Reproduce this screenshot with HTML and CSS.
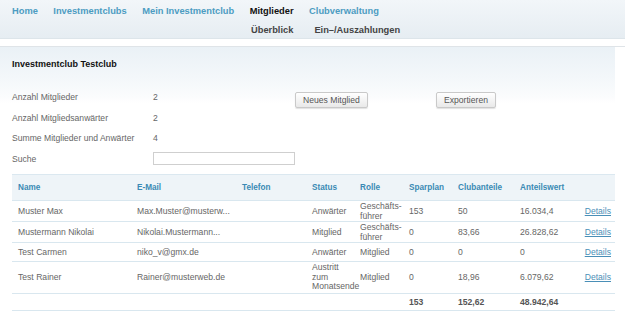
FILE: index.html
```html
<!DOCTYPE html>
<html lang="de">
<head>
<meta charset="utf-8">
<title>Mitglieder</title>
<link rel="stylesheet" href="styles.css">
</head>
<body>
<header class="nav">
  <nav class="nav-main">
    <a class="nav-link">Home</a>
    <a class="nav-link">Investmentclubs</a>
    <a class="nav-link">Mein Investmentclub</a>
    <a class="nav-link active">Mitglieder</a>
    <a class="nav-link">Clubverwaltung</a>
  </nav>
  <nav class="nav-sub">
    <a class="sub-link">Überblick</a>
    <a class="sub-link">Ein–/Auszahlungen</a>
  </nav>
</header>
<div class="strip"></div>
<main class="panel">
  <div class="panel-head">
    <h1 class="title">Investmentclub Testclub</h1>
  </div>
  <div class="info">
    <span class="label">Anzahl Mitglieder</span>
    <span class="value">2</span>
    <span class="btn-cell"><button class="btn">Neues Mitglied</button></span>
    <span class="btn-cell"><button class="btn">Exportieren</button></span>
    <span class="label">Anzahl Mitgliedsanwärter</span>
    <span class="value">2</span>
    <span class="filler"></span><span class="filler"></span>
    <span class="label">Summe Mitglieder und Anwärter</span>
    <span class="value">4</span>
    <span class="filler"></span><span class="filler"></span>
    <span class="label">Suche</span>
    <span class="value"><input class="search" type="text"></span>
    <span class="filler"></span><span class="filler"></span>
  </div>
  <table class="members">
    <colgroup>
      <col class="c-name"><col class="c-mail"><col class="c-tel"><col class="c-status"><col class="c-rolle"><col class="c-spar"><col class="c-club"><col class="c-wert"><col class="c-det">
    </colgroup>
    <thead>
      <tr>
        <th>Name</th><th>E-Mail</th><th>Telefon</th><th>Status</th><th>Rolle</th><th>Sparplan</th><th>Clubanteile</th><th>Anteilswert</th><th></th>
      </tr>
    </thead>
    <tbody>
      <tr>
        <td>Muster Max</td><td>Max.Muster@musterw...</td><td></td><td>Anwärter</td><td>Geschäfts-<br>führer</td><td>153</td><td>50</td><td>16.034,4</td><td class="det"><a class="details">Details</a></td>
      </tr>
      <tr>
        <td>Mustermann Nikolai</td><td>Nikolai.Mustermann...</td><td></td><td>Mitglied</td><td>Geschäfts-<br>führer</td><td>0</td><td>83,66</td><td>26.828,62</td><td class="det"><a class="details">Details</a></td>
      </tr>
      <tr>
        <td>Test Carmen</td><td>niko_v@gmx.de</td><td></td><td>Anwärter</td><td>Mitglied</td><td>0</td><td>0</td><td>0</td><td class="det"><a class="details">Details</a></td>
      </tr>
      <tr class="tall">
        <td>Test Rainer</td><td>Rainer@musterweb.de</td><td></td><td>Austritt<br>zum<br>Monatsende</td><td>Mitglied</td><td>0</td><td>18,96</td><td>6.079,62</td><td class="det"><a class="details">Details</a></td>
      </tr>
    </tbody>
    <tfoot>
      <tr>
        <td></td><td></td><td></td><td></td><td></td><td>153</td><td>152,62</td><td>48.942,64</td><td></td>
      </tr>
    </tfoot>
  </table>
</main>
</body>
</html>
```

FILE: styles.css
```css
* { box-sizing: border-box; }
html, body { margin: 0; padding: 0; background: #ffffff; }
body {
  width: 625px;
  height: 332px;
  overflow: hidden;
  font-family: "Liberation Sans", Arial, sans-serif;
  font-size: 8.6px;
  color: #666666;
}

.nav {
  height: 39px;
  background: linear-gradient(#f2f6f9, #e6edf2);
  border-bottom: 1px solid #dde5ea;
  padding: 4px 0 0 12px;
}
.nav-main {
  display: flex;
  gap: 15.5px;
  height: 13px;
  align-items: center;
}
.nav-link {
  font-weight: bold;
  font-size: 9.3px;
  color: #4c9cc2;
  white-space: nowrap;
}
.nav-link.active { color: #111111; }
.nav-sub {
  display: flex;
  gap: 21px;
  margin: 6px 0 0 239px;
  height: 13px;
  align-items: center;
}
.sub-link {
  font-weight: bold;
  font-size: 9.3px;
  color: #444444;
  white-space: nowrap;
}

.strip {
  height: 8px;
  background: #ffffff;
  border-bottom: 1px solid #dfe4e8;
}

.panel {
  padding: 0 10px 0 12px;
  background-image: linear-gradient(#eaf1f6 0, #f3f7fa 30px, #fbfcfd 50px, #ffffff 56px);
  background-size: 615px 100%;
  background-repeat: no-repeat;
}
.panel-head {
  padding-top: 11px;
  height: 40px;
}
.title {
  margin: 0;
  font-size: 9px;
  line-height: 12px;
  font-weight: bold;
  color: #111111;
}

.info {
  display: grid;
  grid-template-columns: 141px 142px 141px auto;
  grid-auto-rows: 20.5px;
  align-items: center;
}
.label, .value { line-height: 12px; }
.btn-cell { display: flex; align-items: center; padding-top: 5px; }
.btn {
  font-family: "Liberation Sans", Arial, sans-serif;
  font-size: 8.6px;
  color: #555555;
  height: 16px;
  padding: 0 7px;
  border: 1px solid #c9c9c9;
  border-radius: 2px;
  background: linear-gradient(#ffffff, #e9e9e9);
  box-shadow: 0 1px 1px rgba(0,0,0,0.12);
}
.search {
  display: block;
  width: 142px;
  height: 13px;
  border: 1px solid #cfcfcf;
  background: #ffffff;
  padding: 0;
  margin: 0;
}

.members {
  margin-top: 5px;
  width: 603px;
  border-collapse: collapse;
  table-layout: fixed;
}
.c-name { width: 119px; }
.c-mail { width: 105px; }
.c-tel { width: 70px; }
.c-status { width: 48px; }
.c-rolle { width: 49px; }
.c-spar { width: 49px; }
.c-club { width: 62px; }
.c-wert { width: 64px; }
.c-det { width: 37px; }

.members th {
  background: #eef4f8;
  border-top: 1px solid #dbe8f0;
  height: 26px;
  text-align: left;
  padding: 0 0 0 6px;
  font-size: 8.2px;
  font-weight: bold;
  color: #3a8ab4;
  white-space: nowrap;
}
.members td {
  border-top: 1px solid #d9e7ef;
  padding: 0 0 0 6px;
  height: 19px;
  line-height: 10px;
  vertical-align: middle;
  white-space: nowrap;
  color: #666666;
}
.members tr.tall td { height: 32px; line-height: 9.5px; }
.members td.det { text-align: right; padding: 0 4px 0 0; }
.details {
  color: #4a8fb7;
  text-decoration: underline;
}
.members tfoot td {
  border-bottom: 1px solid #d9e7ef;
  height: 17px;
  font-weight: bold;
  color: #555555;
}
```
